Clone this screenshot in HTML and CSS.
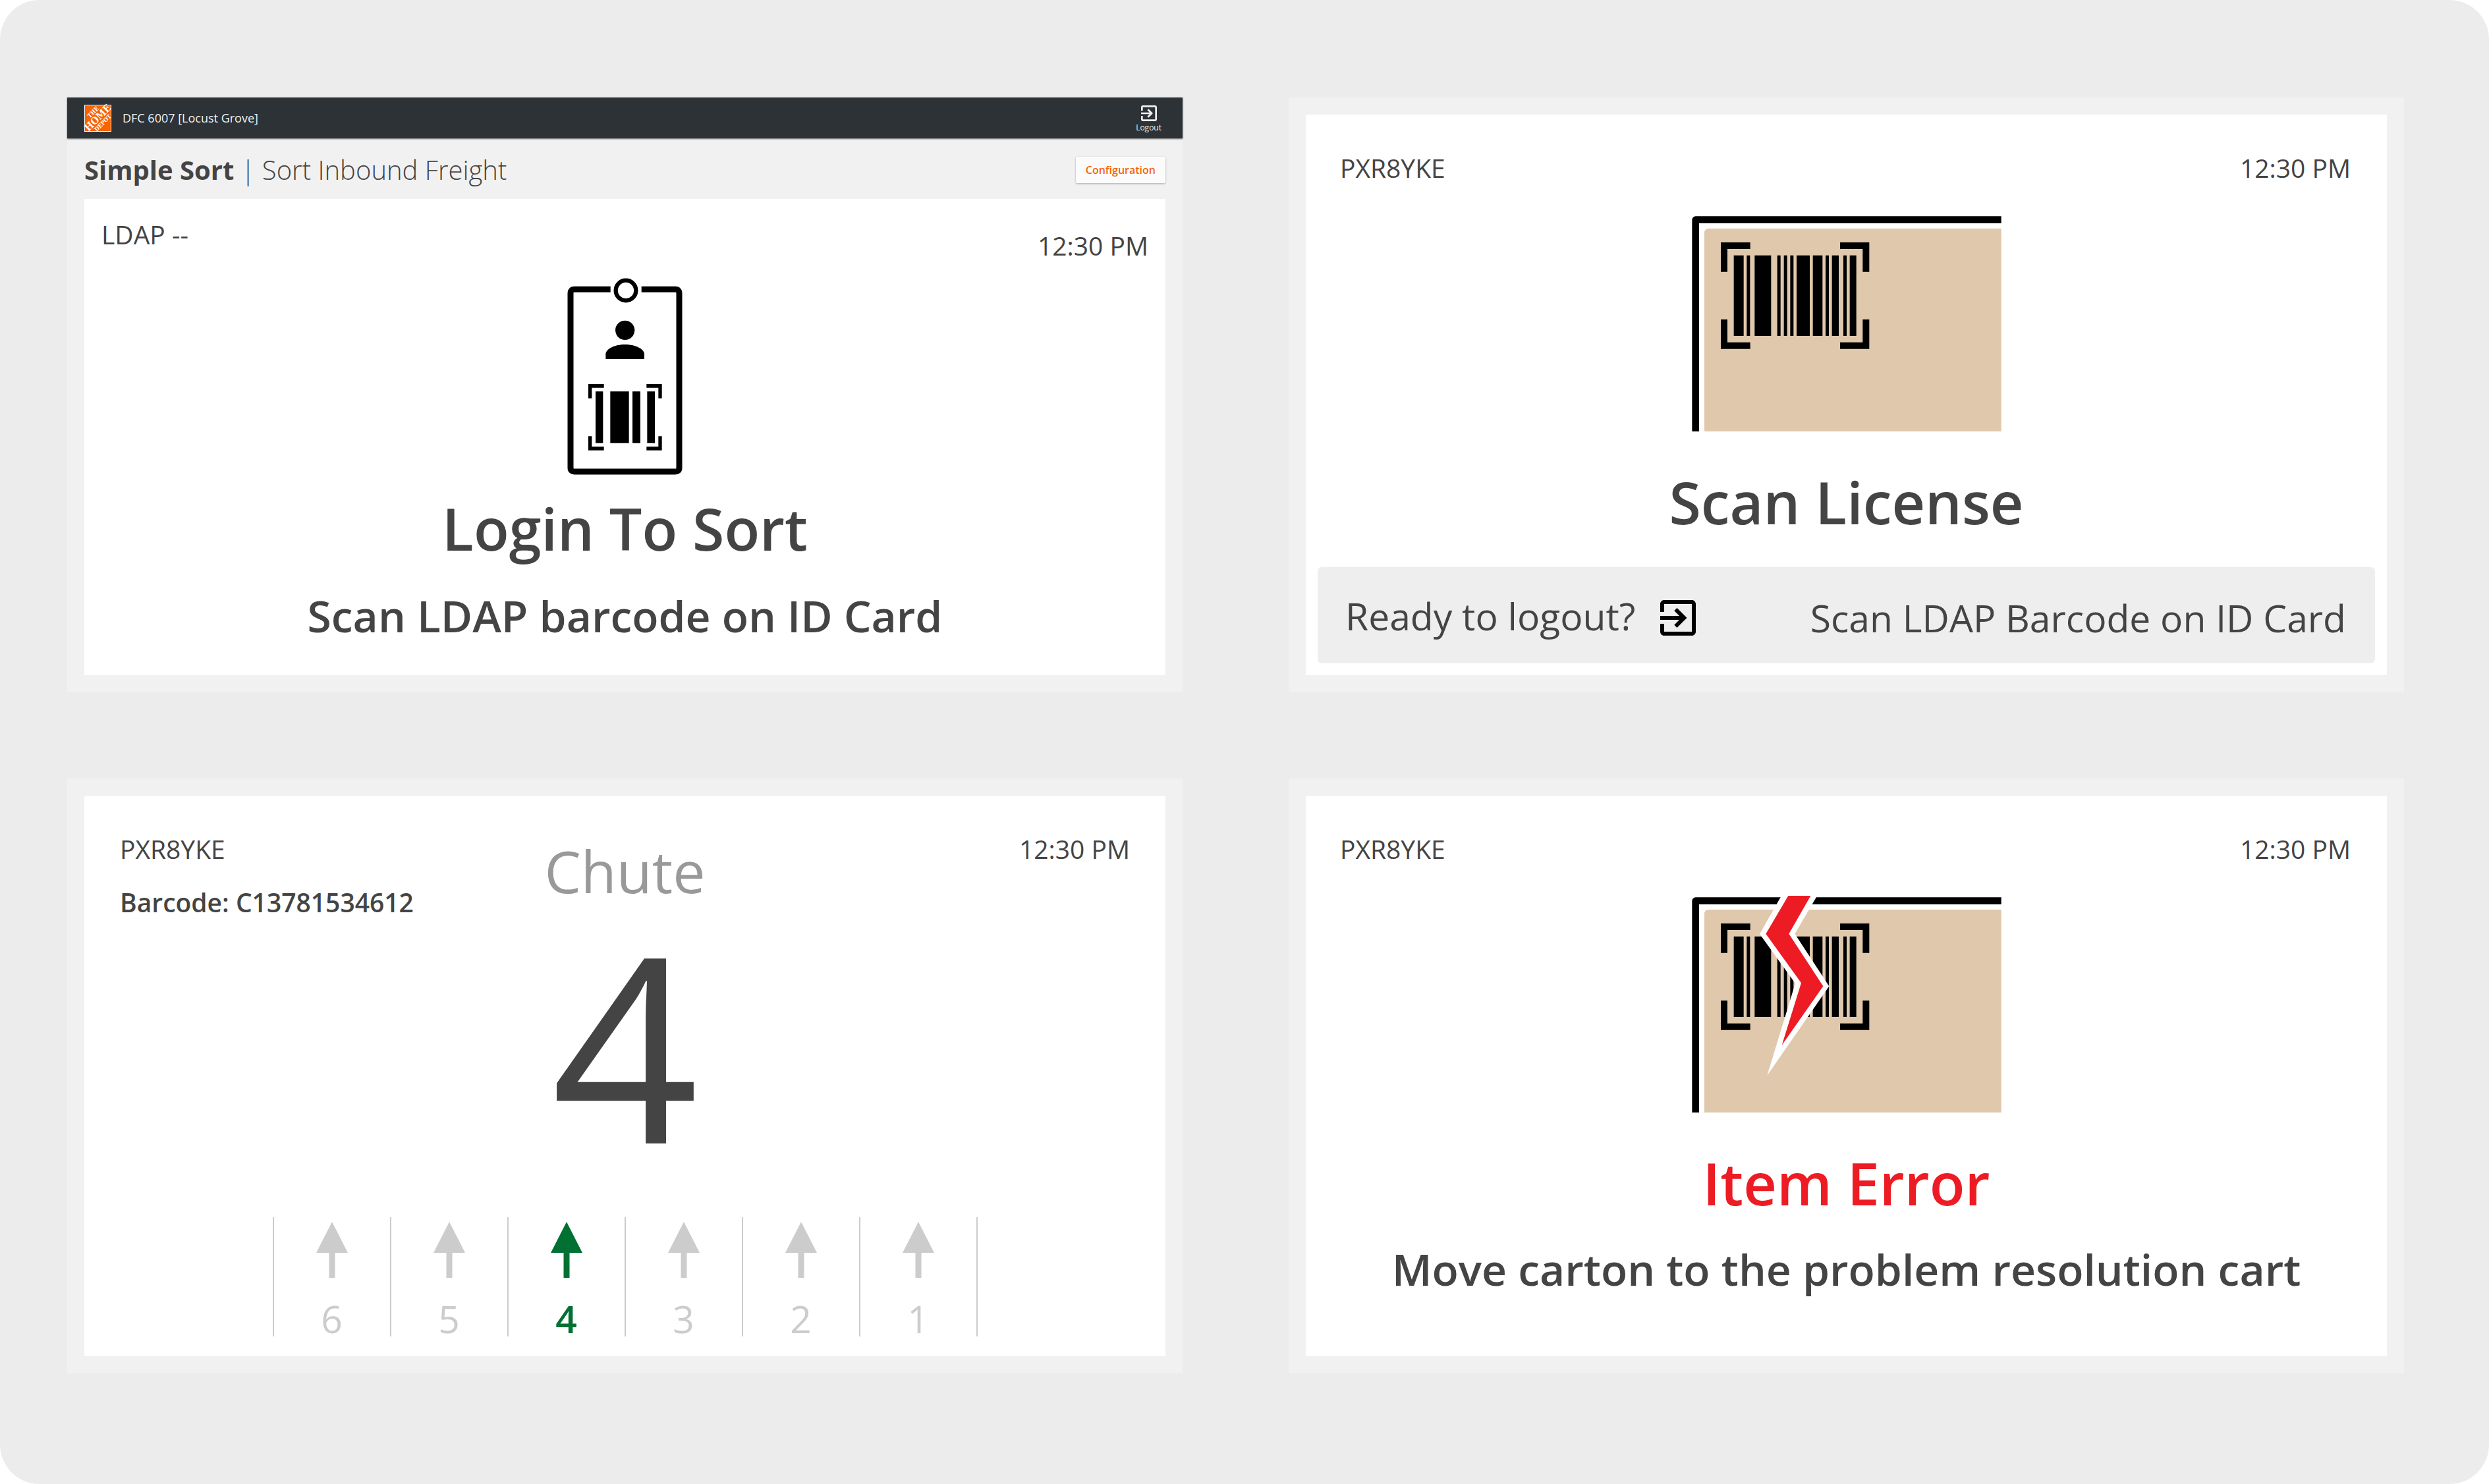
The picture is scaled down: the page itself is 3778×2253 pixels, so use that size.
FILE: index.html
```html
<!DOCTYPE html>
<html lang="en">
<head>
<meta charset="utf-8">
<meta name="viewport" content="width=device-width, initial-scale=1">
<title>Simple Sort</title>
<link rel="stylesheet" href="styles.css">
</head>
<body>
<svg class="defs" aria-hidden="true">
  <symbol id="exit" viewBox="3 3 18 18">
    <path d="M10.09 15.59L11.5 17l5-5-5-5-1.41 1.41L12.67 11H3v2h9.67l-2.58 2.59zM19 3H5c-1.11 0-2 .9-2 2v4h2V5h14v14H5v-4H3v4c0 1.1.89 2 2 2h14c1.1 0 2-.9 2-2V5c0-1.1-.9-2-2-2z"/>
  </symbol>
  <symbol id="arrow" viewBox="0 0 48 85">
    <path d="M24 0L48 47H28.500V85H19.500V47H0z"/>
  </symbol>
  <g id="carton">
    <path d="M104 1035V71H1496" fill="none" stroke="#000" stroke-width="32" stroke-linejoin="round"/>
    <path d="M144 1035V131Q144 111 164 111H1496V1035z" fill="#e0c8ac"/>
    <path d="M219 308V174H353V204H249V308zM762 174H895V308H865V204H762zM219 525H249V629H353V659H219zM865 525H895V659H762V629H865z"/>
    <path d="M278 233h45v367h-45zM337 233h15v367h-15zM373 233h75v367h-75zM476 233h15v367h-15zM506 233h15v367h-15zM535 233h15v367h-15zM564 233h60v367h-60zM638 233h44v367h-44zM696 233h15v367h-15zM725 233h31v367h-31zM777 233h15v367h-15zM806 233h30v367h-30z"/>
  </g>
</svg>
<main class="board">

  <section class="screen">
    <header class="topbar">
      <svg class="logo" viewBox="0 0 41 41" role="img" aria-label="The Home Depot">
        <rect width="41" height="41" fill="#fff"/>
        <rect x="1" y="1" width="39" height="39" fill="#f96302"/>
        <g class="logo-text" transform="rotate(-45 20.500 20.500)" text-anchor="middle">
          <text x="22" y="12" font-size="9">THE</text>
          <text x="21" y="25" font-size="15">HOME</text>
          <text x="21" y="34" font-size="9">DEPOT</text>
        </g>
      </svg>
      <span class="site">DFC 6007 [Locust Grove]</span>
      <button class="logout" type="button">
        <svg class="logout-icon" aria-hidden="true"><use href="#exit"/></svg>
        Logout
      </button>
    </header>
    <div class="titlebar">
      <h1 class="title"><strong>Simple Sort</strong> | Sort Inbound Freight</h1>
      <button class="config" type="button">Configuration</button>
    </div>
    <div class="card card-login">
      <div class="meta">
        <span>LDAP --</span>
        <time class="time-low">12:30 PM</time>
      </div>
      <svg class="badge" viewBox="123 66 525 897" aria-hidden="true">
        <path d="M320 118H156Q138 118 138 136V931Q138 948 156 948H615Q633 948 633 931V136Q633 118 615 118H461" fill="none" stroke="#000" stroke-width="27"/>
        <circle cx="390" cy="123" r="46" fill="#fff" stroke="#000" stroke-width="19"/>
        <circle cx="386" cy="304" r="44"/>
        <path d="M298 435V412C300 388 340 369 386 369S472 388 474 412V435z"/>
        <path d="M219 614V549H290V566H235V614zM484 549H554V614H538V566H484zM219 787H235V834H290V851H219zM538 787H554V851H484V834H538z"/>
        <path d="M252 583h34v235h-34zM319 583h85v235h-85zM420 583h36v235h-36zM487 583h35v235h-35z"/>
      </svg>
      <h2 class="headline">Login To Sort</h2>
      <p class="sub">Scan LDAP barcode on ID Card</p>
    </div>
  </section>

  <section class="screen screen-plain">
    <div class="card card-task">
      <div class="meta">
        <span>PXR8YKE</span>
        <time>12:30 PM</time>
      </div>
      <svg class="carton" viewBox="87 54 1410 981" aria-hidden="true"><use href="#carton"/></svg>
      <h2 class="headline">Scan License</h2>
      <div class="logout-bar">
        <span>Ready to logout?</span>
        <svg class="bar-icon" aria-hidden="true"><use href="#exit"/></svg>
        <span class="bar-hint">Scan LDAP Barcode on ID Card</span>
      </div>
    </div>
  </section>

  <section class="screen screen-plain">
    <div class="card card-task">
      <div class="result">
        <div class="result-info">
          <span>PXR8YKE</span>
          <strong>Barcode: C13781534612</strong>
        </div>
        <div class="result-chute">
          <h2 class="chute-label">Chute</h2>
          <output class="chute-number">4</output>
        </div>
        <time class="result-time">12:30 PM</time>
      </div>
      <ol class="chutes">
        <li class="chute"><svg class="arrow" aria-hidden="true"><use href="#arrow"/></svg>6</li>
        <li class="chute"><svg class="arrow" aria-hidden="true"><use href="#arrow"/></svg>5</li>
        <li class="chute chute-active"><svg class="arrow" aria-hidden="true"><use href="#arrow"/></svg>4</li>
        <li class="chute"><svg class="arrow" aria-hidden="true"><use href="#arrow"/></svg>3</li>
        <li class="chute"><svg class="arrow" aria-hidden="true"><use href="#arrow"/></svg>2</li>
        <li class="chute"><svg class="arrow" aria-hidden="true"><use href="#arrow"/></svg>1</li>
      </ol>
    </div>
  </section>

  <section class="screen screen-plain">
    <div class="card card-task">
      <div class="meta">
        <span>PXR8YKE</span>
        <time>12:30 PM</time>
      </div>
      <svg class="carton" viewBox="87 54 1410 981" aria-hidden="true">
        <use href="#carton"/>
        <path d="M505 30L396 222L558 447L430 866L712 460L556 221L668 30z" fill="#fff"/>
        <path d="M526 48H628L529 221L685 460L497 728L585 445L424 221z" fill="#ed1c24"/>
      </svg>
      <h2 class="headline headline-error">Item Error</h2>
      <p class="sub">Move carton to the problem resolution cart</p>
    </div>
  </section>

</main>
</body>
</html>
```
FILE: styles.css
```css
*, *::before, *::after { box-sizing: border-box; }

body {
  margin: 0;
  background: #fff;
  color: #444;
  font-family: "Open Sans", "Noto Sans", sans-serif;
  font-size: 39px;
  line-height: 54px;
}

h1, h2, p, ol { margin: 0; padding: 0; font-weight: 400; }
button { margin: 0; border: 0; font-family: inherit; cursor: pointer; }
.defs { display: none; }

.board {
  display: grid;
  grid-template-columns: 1fr 1fr;
  align-content: start;
  gap: 131px 161px;
  min-height: 100vh;
  padding: 148px 129px 168px 102px;
  border-radius: 60px;
  background: #ececec;
}

.screen {
  display: flex;
  flex-direction: column;
  padding-bottom: 26px;
  background: #f1f1f1;
}
.screen-plain { padding-top: 26px; }

.card {
  display: flex;
  flex: 1;
  flex-direction: column;
  margin: 0 26px;
  background: #fff;
}

/* top bar */
.topbar {
  display: flex;
  align-items: center;
  height: 62px;
  padding: 0 32px 0 26px;
  background: #2d3236;
  box-shadow: 0 1px 2px rgba(0, 0, 0, .6);
  color: #f1f1f1;
}
.logo { width: 41px; height: 41px; overflow: visible; }
.logo-text { fill: #fff; font-family: "DejaVu Serif Condensed", "DejaVu Serif", serif; font-weight: 700; }
.site { margin-left: 17px; font-size: 18px; line-height: 24px; }
.logout {
  display: flex;
  flex-direction: column;
  align-items: center;
  gap: 2px;
  margin-left: auto;
  padding: 4px 0 0;
  background: none;
  color: inherit;
  font-size: 12px;
  line-height: 16px;
}
.logout-icon { width: 24px; height: 24px; fill: currentColor; }

.titlebar {
  display: flex;
  align-items: center;
  justify-content: space-between;
  height: 92px;
  padding: 3px 26px 0;
}
.title { font-size: 40px; font-weight: 300; }
.title strong { font-weight: 700; }
.config {
  height: 40px;
  padding: 0 15px;
  border-radius: 2px;
  background: #fbfbfb;
  box-shadow: 0 1px 3px rgba(0, 0, 0, .3);
  color: #f96302;
  font-size: 16px;
  font-weight: 600;
  line-height: 22px;
}

/* shared card content */
.meta { display: flex; justify-content: space-between; align-items: flex-start; }
.headline { font-size: 88px; font-weight: 600; line-height: 120px; text-align: center; }
.headline-error { color: #ed1c24; }
.sub { margin-top: 27px; font-size: 66px; font-weight: 600; line-height: 90px; text-align: center; }

.card-login { padding: 27px 26px 46px; }
.time-low { margin-top: 17px; }
.badge { align-self: center; width: 175px; height: 299px; margin: 22px 0 21px; }

.card-task { padding: 54px 18px 18px; }
.card-task .meta { padding: 0 37px 0 34px; }
.card-task .sub { margin-top: 25px; }
.carton { align-self: center; width: 470px; height: 327px; margin: 46px 0 47px; overflow: visible; }

/* logout prompt */
.logout-bar {
  display: flex;
  align-items: flex-start;
  margin-top: 39px;
  padding: 35px 44px 30px 42px;
  border-radius: 6px;
  background: #eee;
  font-size: 57px;
  line-height: 78px;
}
.bar-icon { width: 54px; height: 54px; margin: 15px 0 0 38px; fill: #000; }
.bar-hint { margin: 3px 0 0 auto; }

/* chute result */
.result {
  display: grid;
  grid-template-columns: 1fr auto 1fr;
  padding: 0 36px;
}
.result-info { display: flex; flex-direction: column; gap: 27px; }
.result-info strong { font-weight: 600; }
.result-chute { display: flex; flex-direction: column; align-items: center; gap: 7px; }
.chute-label { color: #999; font-size: 88px; line-height: 120px; }
.chute-number { font-size: 391px; line-height: 392px; }
.result-time { text-align: right; }

.chutes { display: flex; justify-content: center; margin: 67px 0 12px; list-style: none; }
.chute {
  display: flex;
  flex-direction: column;
  align-items: center;
  gap: 35px;
  width: 178px;
  padding-top: 7px;
  border-left: 2px solid #ccc;
  color: #ccc;
  font-size: 57px;
  line-height: 54px;
}
.chute:last-child { width: 180px; border-right: 2px solid #ccc; }
.chute-active { color: #007033; font-weight: 600; }
.arrow { width: 48px; height: 85px; fill: currentColor; }
```
